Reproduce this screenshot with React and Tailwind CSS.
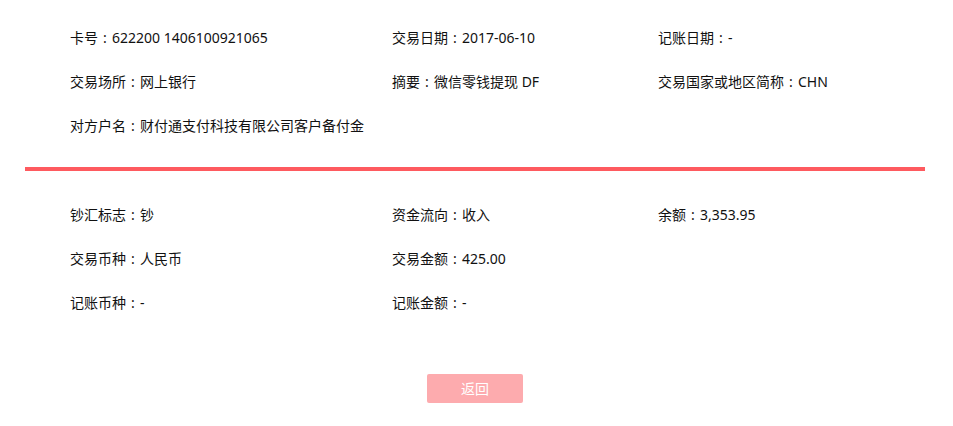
import React from 'react';

const top = [
	['卡号', '622200 1406100921065'],
	['交易日期', '2017-06-10'],
	['记账日期', '-'],
	['交易场所', '网上银行'],
	['摘要', '微信零钱提现 DF'],
	['交易国家或地区简称', 'CHN'],
	['对方户名', '财付通支付科技有限公司客户备付金'],
];

const bottom = [
	['钞汇标志', '钞'],
	['资金流向', '收入'],
	['余额', '3,353.95'],
	['交易币种', '人民币'],
	['交易金额', '425.00'],
	null,
	['记账币种', '-'],
	['记账金额', '-'],
];

function Field({ item }) {
	if (!item) return <div />;
	return (
		<div className="h-[44px] flex items-center whitespace-nowrap">
			{item[0]}
			<span className="inline-block w-[14px] text-center">:</span>
			{item[1]}
		</div>
	);
}

function Section({ items }) {
	return (
		<div className="grid grid-cols-[322px_266px_1fr] pl-[45px]">
			{items.map((item, i) => (
				<Field key={i} item={item} />
			))}
		</div>
	);
}

export default function App() {
	return (
		<div className="w-[953px] h-[426px] bg-white text-[14px] text-[#111] font-['Noto_Sans','Noto_Sans_CJK_SC',sans-serif]">
			<div className="mx-[25px] w-[900px] pt-[15px]">
				<Section items={top} />
				<div className="mt-[20px] h-[4px] bg-[#fe5a5f]" />
				<div className="pt-[21px]">
					<Section items={bottom} />
				</div>
				<div className="flex justify-center mt-[50px]">
					<button className="w-[96px] h-[29px] rounded-[2px] bg-[#fdabae] text-white text-[14px] leading-none">
						返回
					</button>
				</div>
			</div>
		</div>
	);
}
